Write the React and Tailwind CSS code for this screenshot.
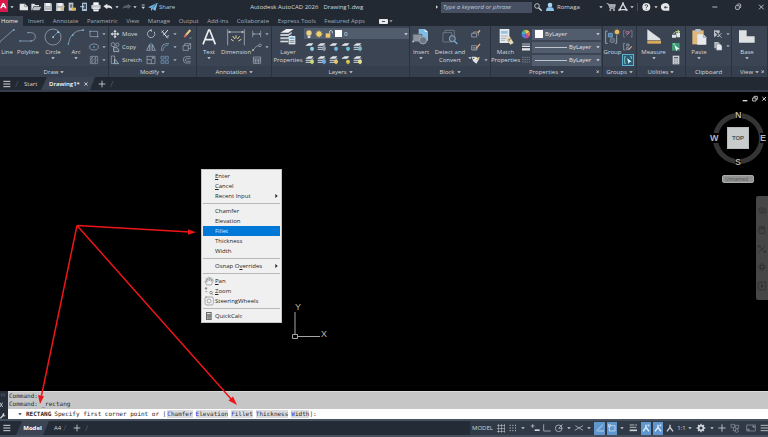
import React from "react";

/* Icons use a grid of three units to the pixel. */
function Icon({ w = 12, h = 12, sw = 2.5, children, className = "" }) {
  return (
    <svg
      aria-hidden="true"
      width={w}
      height={h}
      viewBox={`0 0 ${w * 3} ${h * 3}`}
      fill="none"
      stroke="currentColor"
      strokeWidth={sw}
      className={`shrink-0 ${className}`}
    >
      {children}
    </svg>
  );
}

const Caret = ({ className = "" }) => (
  <Icon w={4} h={4} className={className}>
    <path d="M1 4h10l-5 6z" fill="currentColor" stroke="none" />
  </Icon>
);

const fill = (c) => ({ fill: c, stroke: "none" });

/* ---------- title bar ---------- */
const NewFile = () => (
  <Icon><path d="M5 8h15l10 9v11H5z" {...fill("#e4e6e8")} /><path d="M20 8v9h10" stroke="#8b929b" /></Icon>
);
const OpenFile = () => (
  <Icon><path d="M4 8h9l3 4h11v4H11L6 28H4z" {...fill("#d9dcdf")} /><path d="M12 17h22l-6 11H7z" {...fill("#b9bec4")} /></Icon>
);
const SaveFile = () => (
  <Icon><path d="M6 6h21l3 3v21H6z" {...fill("#aeb5bd")} /><path d="M11 6h14v9H11z" {...fill("#eef0f1")} /><path d="M10 20h16v10H10z" {...fill("#dfe2e5")} /><path d="M10 24h16" stroke="#717a86" /></Icon>
);
const SaveAs = () => (
  <Icon><path d="M6 6h21l3 3v21H6z" {...fill("#aeb5bd")} /><path d="M11 6h14v9H11z" {...fill("#eef0f1")} /><path d="M10 20h12v10H10z" {...fill("#dfe2e5")} /><path d="M31 15L20 28" stroke="#e8c46a" strokeWidth="4" /></Icon>
);
const Mobile = () => (
  <Icon><path d="M8 5h14v24H8z" {...fill("#c8ccd1")} /><path d="M12 10h7v10h-7z" {...fill("#697380")} /><path d="M18 20h12v9H18z" {...fill("#d7b35d")} /></Icon>
);
const Phone = () => (
  <Icon><path d="M12 5h15v25H12z" {...fill("#a8bccd")} /><path d="M15 9h9v15h-9z" {...fill("#3b5266")} /><path d="M6 17h11m-4-5l5 5-5 5" stroke="#b6d6ee" /></Icon>
);
const Printer = () => (
  <Icon><path d="M10 4h16v8H10z" {...fill("#fff")} /><rect x="4" y="11" width="28" height="13" rx="3" {...fill("#c4c9ce")} /><path d="M10 20h16v11H10z" {...fill("#f4f5f6")} /><path d="M12 25h12" stroke="#8b929b" /></Icon>
);
const Undo = () => (
  <Icon><path d="M4 16l12-8v5c10 0 15 4 15 12-4-5-8-5-15-5v5z" {...fill("#e4e6e8")} /></Icon>
);
const Redo = () => (
  <Icon><path d="M31 16L20 8v5C10 13 5 17 5 24c4-4 8-4 15-4v5z" {...fill("#59616c")} /></Icon>
);
const Plane = () => (
  <Icon><path d="M3 19L32 5l-7 25-8-6-5 6v-9z" {...fill("#79c0ee")} /><path d="M12 21L27 9 17 24" stroke="#28445c" strokeWidth="1.500" /></Icon>
);

function TitleBar() {
  const bar = [["New", NewFile], ["Open", OpenFile], ["Save", SaveFile], ["Save as", SaveAs], ["Open from web", Mobile], ["Save to mobile", Phone], ["Plot", Printer]];
  return (
    <header className="flex h-[14px] items-center text-[#d5d9dd]">
      <button aria-label="Application menu" className="flex h-3 w-2 items-center self-start bg-[#d81b4c]">
        <Icon w={8} h={12}><path d="M0 25L8 9h4l8 16h-5l-2-4H7l-2 4z" {...fill("#fff")} /><path d="M8.500 18L10 14l2 4z" {...fill("#d81b4c")} /></Icon>
      </button>
      <Caret className="mx-[2px]" />
      <div className="ml-[2px] flex">
        {bar.map(([n, C]) => <button key={n} aria-label={n}><C /></button>)}
      </div>
      <div className="flex items-center">
        <button aria-label="Undo"><Undo /></button>
        <Caret className="mr-[2px] ml-[1px]" />
        <button aria-label="Redo"><Redo /></button>
        <Caret className="mr-[2px]" />
        <button aria-label="Customize toolbar">
          <Icon w={8} h={8}><path d="M8 6h9" /><path d="M7 11h11l-5 7z" {...fill("#d5d9dd")} /></Icon>
        </button>
      </div>
      <button className="flex items-center text-[#a9cde8]"><Plane />Share</button>
      <div className="flex flex-1 gap-[5px] pl-[75px] whitespace-nowrap">
        <span>Autodesk AutoCAD 2026</span><span>Drawing1.dwg</span>
      </div>
      <Icon w={4} h={6}><path d="M3 4l6 5-6 5z" {...fill("#d5d9dd")} /></Icon>
      <input aria-label="Search" placeholder="Type a keyword or phrase" className="ml-[2px] h-[11px] w-[91px] bg-[#465062] px-[2px] italic outline-none placeholder:text-[#c3c8cf]" />
      <Icon><circle cx="15" cy="15" r="7" /><path d="M20 20l9 9" strokeWidth="4" /></Icon>
      <button className="flex items-center">
        <Icon><circle cx="18" cy="12" r="7" {...fill("#a9d5f2")} /><path d="M6 30q0-10 8-11h8q8 1 8 11z" {...fill("#8ec4e8")} /></Icon>
        <span className="w-[43px] pl-[1px] text-left">Romaga</span>
        <Caret />
      </button>
      <button aria-label="Store" className="ml-[2px]">
        <Icon><path d="M5 8h5l5 14h13l3-11H12" /><path d="M12 12h18l-2 8H15z" {...fill("#a5abb3")} /><circle cx="16" cy="27" r="2" /><circle cx="27" cy="27" r="2" /></Icon>
      </button>
      <button aria-label="Autodesk apps">
        <Icon sw={4}><path d="M18 8L8 26h20z" /><path d="M18 4v6M4 27h7m14 0h7" /></Icon>
      </button>
      <Caret className="mx-[1px]" />
      <span className="mx-[2px] h-2 w-px bg-[#46505c]" />
      <button aria-label="Help">
        <Icon w={13}><circle cx="19" cy="18" r="12" {...fill("#e4e6e8")} /><path d="M15 15q0-4 4-4t4 4q0 2-4 4v2m0 2v3" stroke="#2b333e" /></Icon>
      </button>
      <Caret className="mx-[1px]" />
      <button aria-label="Feedback">
        <Icon w={13}><path d="M6 20a12 11 0 0 1 25-4v13H16Q8 29 6 20z" {...fill("#e4e6e8")} /><path d="M15 19h11m-7-4v8" stroke="#2b333e" /></Icon>
      </button>
      <div className="flex w-[96px] items-center justify-end gap-[11px] pr-[1px]">
        <button aria-label="Minimize"><Icon><path d="M10 18h15" /></Icon></button>
        <button aria-label="Restore"><Icon><rect x="11" y="14" width="11" height="11" rx="2" /><path d="M15 11q1-2 4-2h4q3 0 3 3v5q0 3-2 4" /></Icon></button>
        <button aria-label="Close"><Icon><path d="M12 11l14 14m0-14L12 25" /></Icon></button>
      </div>
    </header>
  );
}

/* ---------- ribbon tabs ---------- */
function RibbonTabs() {
  const tabs = ["Insert", "Annotate", "Parametric", "View", "Manage", "Output", "Add-ins", "Collaborate", "Express Tools", "Featured Apps"];
  return (
    <nav className="flex h-3 items-center text-[#a4abb4]">
      <button className="mt-[2px] flex h-[10px] w-[23px] items-center bg-[#3b4453] pl-[1px] text-[#e8eaec]">Home</button>
      <div className="mt-[2px] flex w-[342px] items-center justify-between pl-[5px] whitespace-nowrap">
        {tabs.map((t) => <button key={t}>{t}</button>)}
      </div>
      <span className="mt-[2px] ml-[14px] h-[5px] w-[9px] rounded-[1px] bg-[#e6e8ea] px-[3px] py-[2px]"><i className="block h-px bg-[#4a535f]" /></span>
      <Caret className="mt-[2px] ml-[1px]" />
    </nav>
  );
}

/* ---------- ribbon ---------- */
function Panel({ title, caret = true, corner = false, children }) {
  return (
    <section className="flex min-w-0 flex-col border-r border-[#2a323e] bg-[#3b4453] text-[#d6dade]">
      <div className="flex h-10 pt-[2px]">{children}</div>
      <h2 className="relative flex h-[11px] items-center justify-center gap-[2px] bg-[#363f4d]">
        {title}
        {caret && <Caret />}
        {corner && <Icon w={5} h={5} className="absolute right-[2px]"><path d="M4 4l6 6m0-6v6H4" strokeWidth="2" /></Icon>}
      </h2>
    </section>
  );
}

function Big({ label, caret, className, children, lines = 1 }) {
  return (
    <button className={`flex shrink-0 flex-col items-center leading-[8px] ${className}`}>
      {children}
      <span className={lines === 2 ? "mt-[2px] text-center whitespace-pre" : "mt-[2px] whitespace-nowrap"}>{label}</span>
      {caret && <Caret />}
    </button>
  );
}

const Col = ({ className = "", children }) => (
  <div className={`flex flex-col justify-between ${className}`}>{children}</div>
);

function Tool({ name, label, caret, children }) {
  return (
    <button aria-label={name} className="flex h-3 items-center text-[#a8b1bc]">
      <Icon sw={2}>{children}</Icon>
      {label && <span className="pl-[1px] text-[#d6dade]">{label}</span>}
      {caret && <Caret className="ml-[2px]" />}
    </button>
  );
}

function DrawPanel() {
  return (
    <Panel title="Draw">
      <Big label="Line" className="w-[14px]">
        <Icon w={16} h={18} sw={2}><path d="M2 42L44 5" stroke="#a8b1bc" /><path d="M42 3h5v5h-5zM0 41h4v4H0z" {...fill("#6ea9d8")} /></Icon>
      </Big>
      <Big label="Polyline" className="w-7">
        <Icon w={18} h={18} sw={2}><path d="M3 39h32q14-1 14-13T35 14H27" stroke="#a8b1bc" /><path d="M1 37h4v4H1zM25 12h4v4h-4zM34 37h4v4h-4z" {...fill("#6ea9d8")} /></Icon>
      </Big>
      <Big label="Circle" caret className="w-[22px]">
        <Icon w={18} h={18} sw={2}><circle cx="27" cy="27" r="24" stroke="#a8b1bc" /><path d="M27 27L42 12" stroke="#6ea9d8" /><path d="M25 25h5v5h-5zM40 10h5v5h-5z" {...fill("#9ccdf0")} /></Icon>
      </Big>
      <Big label="Arc" caret className="w-6">
        <Icon w={18} h={18} sw={2}><path d="M4 48Q10 8 48 6" stroke="#a8b1bc" /><path d="M2 46h4v4H2zM46 4h5v5h-5zM15 19h5v5h-5z" {...fill("#6ea9d8")} /></Icon>
      </Big>
      <Col>
        <Tool name="Rectangle" caret><path d="M6 10h23v16H6z" /><path d="M4 8h4v4H4zM27 24h4v4h-4z" {...fill("#6ea9d8")} /></Tool>
        <Tool name="Ellipse" caret><ellipse cx="18" cy="18" rx="13" ry="9" /><path d="M16 16h4v4h-4z" {...fill("#6ea9d8")} /></Tool>
        <Tool name="Hatch" caret><path d="M7 7h22v22H7zM7 17L17 7M7 27L27 7M15 29L29 15M12 7v22M22 7v22" strokeWidth="1.500" /></Tool>
      </Col>
    </Panel>
  );
}

function ModifyPanel() {
  return (
    <Panel title="Modify">
      <Col className="w-9">
        <Tool name="Move" label="Move"><path d="M18 9v18M9 18h18" stroke="#e6e9ec" strokeWidth="3" /><path d="M18 5l5 6H13zM18 31l5-6H13zM5 18l6-5v10zM31 18l-6-5v10z" {...fill("#e6e9ec")} /></Tool>
        <Tool name="Copy" label="Copy"><circle cx="12" cy="11" r="6" /><circle cx="25" cy="11" r="5" /><path d="M14 19h9l6 6v7H14z" fill="#4c5868" stroke="#c8ced5" /></Tool>
        <Tool name="Stretch" label="Stretch"><path d="M7 6h10v23H7z" /><path d="M17 15l12 14H17z" stroke="#c8ced5" /><path d="M12 28h12" stroke="#6ea9d8" /></Tool>
      </Col>
      <Col className="w-[14px]">
        <Tool name="Rotate"><path d="M27 11A11 11 0 1 1 16 7" strokeWidth="3" /><path d="M20 3v9l-6-5z" {...fill("#c8ced5")} /></Tool>
        <Tool name="Mirror"><path d="M14 10v18H5zM22 10v18h9z" stroke="#b6bfc9" /><path d="M18 5v26" stroke="#6ea9d8" /></Tool>
        <Tool name="Scale"><path d="M6 7h24v22H6zM6 17h13v12M20 15l6-5m-6 0h6v5" /></Tool>
      </Col>
      <Col className="w-[22px]">
        <Tool name="Trim" caret><path d="M8 8l16 20M27 6L13 22" stroke="#e6e9ec" strokeWidth="3" /><path d="M7 14l8-8M22 29l8-8" stroke="#c8ced5" /><circle cx="25" cy="27" r="3" /></Tool>
        <Tool name="Fillet" caret><path d="M8 30V20Q9 9 21 8h9" /><path d="M12 30q0-16 16-18" stroke="#6ea9d8" /></Tool>
        <Tool name="Array" caret><path d="M6 7h9v8H6zM19 7h9v8h-9zM6 20h9v8H6zM19 20h9v8h-9z" stroke="#76a4c9" /></Tool>
      </Col>
      <Col>
        <Tool name="Erase"><path d="M28 6L14 22" stroke="#e9cf8c" strokeWidth="6" /><path d="M16 20l-6 7" stroke="#e36a61" strokeWidth="6" /><path d="M25 30h7" /></Tool>
        <Tool name="Explode"><path d="M6 14h16v14H6zM11 14V8h18v15h-7M22 14l7-6" /></Tool>
        <Tool name="Offset"><path d="M29 8H14q-7 1-7 9t7 10h15M29 14H17q-4 1-4 4t4 4h12" /></Tool>
      </Col>
    </Panel>
  );
}

function AnnotationPanel() {
  return (
    <Panel title="Annotation">
      <Big label="Text" caret className="w-6">
        <Icon w={16} h={18} sw={5}><path d="M6 49L23 6h3l17 43M12 35h25" stroke="#eceef0" /></Icon>
      </Big>
      <Big label="Dimension" className="w-[30px]">
        <Icon w={18} h={18} sw={2}><path d="M2 4v48M52 4v48M4 12h46" stroke="#c4cad1" /><path d="M3 12l7-4v8zM51 12l-7-4v8z" {...fill("#c4cad1")} /><path d="M12 34l8 5M17 24l7 9M27 22v9M38 25l-7 8M43 34l-9 5" stroke="#e8d69b" strokeWidth="3" /></Icon>
      </Big>
      <Col>
        <Tool name="Linear" caret><path d="M5 8v20M29 8v20M6 18h22" /><path d="M5 18l5-3v6zM29 18l-5-3v6z" {...fill("#a8b1bc")} /></Tool>
        <Tool name="Leader" caret><path d="M5 29l12-14h7" /><path d="M3 31l2-8 5 5z" {...fill("#c8ced5")} /><circle cx="27" cy="13" r="4" /></Tool>
        <Tool name="Table"><path d="M7 9h22v19H7zM7 15h22M7 21h22M14 15v13M22 15v13" /></Tool>
      </Col>
    </Panel>
  );
}

const layerMarks = ["#8fd3e8", "#8f9bab", "#6fb6e3", "#64c7d3", "#7fb7c3", "#c9df76", "#6fa8e0", "#e6c963", "#d8c84e", "#efe28b"];
const Layers = ({ mark, lower }) => (
  <>
    <path d="M5 13l9-6h14l-6 7H5z" {...fill("#e1e5e8")} />
    {lower && <path d="M5 17h16l7-6v4l-7 6H5zM5 23h16l7-6v4l-7 6H5z" {...fill("#b4bdc5")} />}
    <circle cx="24" cy="23" r="6" {...fill(mark)} />
    <path d="M22 29h5" stroke={mark} />
  </>
);

function Combo({ name, value, children, className = "" }) {
  return (
    <div className={`relative flex h-[11px] items-center bg-[#515c6d] ${className}`}>
      {children}
      <select aria-label={name} className="h-[11px] min-w-0 flex-1 appearance-none bg-transparent pl-[2px] text-[#e0e3e6] outline-none">
        <option>{value}</option>
      </select>
      <Caret className="mr-[1px] text-[#e0e3e6]" />
    </div>
  );
}

function LayersPanel() {
  return (
    <Panel title="Layers">
      <Big lines={2} label={"Layer\nProperties"} className="w-[32px]">
        <Icon w={18} h={18}><path d="M4 14L22 3h22L28 14z" {...fill("#eef0f1")} /><path d="M4 18h24l10-7v6L28 24H4zM4 28h24l10-7v6L28 34H4z" {...fill("#c3c9ce")} /><path d="M4 38h24v5H4z" {...fill("#d8dcdf")} /><path d="M29 24h20v25H29z" {...fill("#dfe5e9")} /><path d="M32 28h14v5H32z" {...fill("#67b4e6")} /><path d="M32 38h14M32 43h14" stroke="#6b7785" /></Icon>
      </Big>
      <div className="flex min-w-0 flex-1 flex-col justify-between">
        <Combo name="Layer" value="0">
          <Icon w={10} h={10}><circle cx="15" cy="12" r="8" {...fill("#f0cf83")} /><path d="M11 20h8v7h-8z" {...fill("#d8dcdf")} /></Icon>
          <Icon w={10} h={10}><circle cx="15" cy="15" r="8" {...fill("#f0cf6b")} /><path d="M15 3v24M3 15h24M7 7l16 16M23 7L7 23" stroke="#f0cf6b" strokeWidth="1.500" /></Icon>
          <Icon w={10} h={10}><path d="M5 13h14v13H5z" {...fill("#edc56f")} /><path d="M17 13V6q5-4 8 1v6" stroke="#d8dcdf" /></Icon>
          <span className="ml-[1px] h-[7px] w-[7px] bg-white" />
        </Combo>
        {[0, 5].map((r) => (
          <div key={r} className="flex">
            {layerMarks.slice(r, r + 5).map((m, i) => (
              <Tool key={m} name={`Layer tool ${r + i + 1}`}><Layers mark={m} lower={(r === 5 && i !== 3) || i === 1 || i === 4} /></Tool>
            ))}
          </div>
        ))}
      </div>
    </Panel>
  );
}

function BlockPanel() {
  return (
    <Panel title="Block">
      <Big label="Insert" caret className="w-[22px]">
        <Icon w={18} h={18}><path d="M20 3h18l10 9v26H20z" {...fill("#80bde5")} /><path d="M38 3l10 9H38z" {...fill("#d3eafa")} /><path d="M3 19h27v22H3z" fill="#8a939e" stroke="#5d6774" /><circle cx="33" cy="37" r="11" fill="#6d7783" stroke="#a8b1bc" /><path d="M1 38h5v5H1z" {...fill("#c4cad1")} /></Icon>
      </Big>
      <Big lines={2} label={"Detect and\nConvert"} className="w-[36px]">
        <Icon w={18} h={18}><path d="M6 14h26v28H6zM12 14V7h28v26H32" stroke="#727e8d" /><circle cx="34" cy="32" r="9" fill="#48586b" stroke="#a2bcd2" /><path d="M40 39l9 9" stroke="#6ea9d8" strokeWidth="4" /></Icon>
      </Big>
      <Caret className="mt-[28px] -mr-[2px]" />
      <Col>
        <Tool name="Create block"><path d="M5 16h15v11H5zM10 16v-4h15v11" stroke="#aeb5bd" /><path d="M24 14l6-7" stroke="#e6c479" strokeWidth="4" /></Tool>
        <Tool name="Edit block"><path d="M5 14h15v13H5z" stroke="#aeb5bd" /><path d="M8 20h9m-9 4h15" /><path d="M19 22L30 9" stroke="#e6a97a" strokeWidth="4" /></Tool>
        <Tool name="Edit attributes" caret><path d="M5 8h12l11 6-9 15-10-8z" {...fill("#dfe2e5")} /><path d="M20 18l8-8" stroke="#dfbf72" strokeWidth="4" /><circle cx="11" cy="13" r="2" {...fill("#38404e")} /></Tool>
      </Col>
    </Panel>
  );
}

function PropertiesPanel() {
  return (
    <Panel title="Properties" corner>
      <Big lines={2} label={"Match\nProperties"} className="w-[29px]">
        <Icon w={18} h={18}><path d="M8 3h29v42H8z" {...fill("#e5e8ea")} /><path d="M12 9h20v8H12z" {...fill("#92c3e4")} /><path d="M12 24h20M12 31h15M12 37h12" stroke="#9ca5af" /><path d="M26 30l12-5 12 20-10 5z" {...fill("#ead9b5")} /><path d="M31 37l12-6M34 43l6-12" stroke="#87765b" /></Icon>
      </Big>
      <div className="flex min-w-0 flex-1 flex-col justify-between">
        <div className="flex items-center">
          <Icon><g stroke="none"><path d="M18 18V5a13 13 0 0 1 11 7z" fill="#f0c954" /><path d="M18 18l11-6a13 13 0 0 1-1 14z" fill="#ed7445" /><path d="M18 18l10 8a13 13 0 0 1-13 5z" fill="#c250a4" /><path d="M18 18l-3 13A13 13 0 0 1 5 19z" fill="#547de0" /><path d="M18 18L5 19a13 13 0 0 1 4-11z" fill="#44b5cf" /><path d="M18 18L9 8a13 13 0 0 1 9-3z" fill="#70bf6a" /></g></Icon>
          <Combo name="Color" value="ByLayer" className="mr-[1px] min-w-0 flex-1"><span className="ml-[3px] h-2 w-2 bg-white" /></Combo>
        </div>
        {["Lineweight", "Linetype"].map((n, i) => (
          <div key={n} className="flex items-center">
            {i === 0
              ? <Icon><path d="M6 9h24" /><path d="M6 16h24" stroke="#e3e6e8" strokeWidth="4" /><path d="M6 25h24" stroke="#e3e6e8" strokeWidth="7" /></Icon>
              : <Icon sw={1.5}><path d="M6 10h24M6 17h24M6 24h24" stroke="#aab1ba" strokeDasharray="5 2" /></Icon>}
            <Combo name={n} value="ByLayer" className="mr-[1px] min-w-0 flex-1"><span className="ml-[3px] h-px w-8 bg-[#bfc5cc]" /></Combo>
          </div>
        ))}
      </div>
    </Panel>
  );
}

function SmallPanels() {
  return (
    <>
      <Panel title="Groups">
        <Big label="Group" className="w-[19px]">
          <Icon w={18} h={18}><path d="M11 9H5v37h6M38 22v24h-5" stroke="#aab3bd" /><path d="M13 16h12v11H13z" fill="#4d7fa7" stroke="#74aad3" /><circle cx="25" cy="37" r="7" fill="#56606e" stroke="#818c99" /><circle cx="39" cy="12" r="6" {...fill("#ffdc83")} /><path d="M39 2v20M29 12h20M32 5l14 14M46 5L32 19" stroke="#e6b54b" strokeWidth="2" /></Icon>
        </Big>
        <Col>
          <Tool name="Ungroup"><path d="M9 7H5v20h4M26 7h4v20h-4" stroke="#8392a4" /><path d="M12 10h8v6h-8z" stroke="#d67f9d" /><path d="M13 23L26 9" stroke="#d67f9d" /></Tool>
          <Tool name="Edit group"><path d="M9 7H5v20h4M14 9h7v6h-7zM13 20h6v6h-6z" /><path d="M20 26l9-10" stroke="#dca282" strokeWidth="4" /></Tool>
          <button aria-label="Group selection" className="border border-[#5bb1cf] bg-[#285c74]">
            <Icon w={10} h={10}><path d="M9 5H5v20h4M21 5h4v7" stroke="#8ed2cc" /><path d="M12 9l14 11-6 1-3 6z" {...fill("#d5f1ef")} /></Icon>
          </button>
        </Col>
      </Panel>
      <Panel title="Utilities">
        <Big label="Measure" caret className="w-[33px]">
          <Icon w={18} h={18}><path d="M7 4l39 28v5H7z" {...fill("#dfe2e4")} /><path d="M7 38h41v9H7z" {...fill("#dcae5e")} /><path d="M12 39v4M21 39v4M30 39v4M39 39v4" stroke="#b18a48" strokeWidth="1.500" /></Icon>
        </Big>
        <Col>
          <Tool name="Quick select"><path d="M6 20h12v9H6zM18 14h12v14H20" {...fill("#e1e5e7")} /><path d="M10 18l7-7h11m-5-5l6 5-6 5" stroke="#c6df8b" strokeWidth="3" /></Tool>
          <Tool name="Select all"><path d="M6 6h23v23H6z" {...fill("#3d9b78")} /><path d="M9 9h7m-4-3v7" stroke="#9de0c4" /><path d="M13 12l16 12-7 1-3 6z" {...fill("#f1f4f4")} /></Tool>
          <Tool name="Calculator"><path d="M8 5h20v26H8z" {...fill("#cdd1d5")} /><path d="M12 9h12v4H12z" {...fill("#586370")} /><path d="M12 18h12M12 23h12M12 28h12" stroke="#66717d" strokeDasharray="3 1.500" /></Tool>
        </Col>
      </Panel>
      <Panel title="Clipboard" caret={false}>
        <Big label="Paste" caret className="w-[26px]">
          <Icon w={18} h={18}><path d="M7 7h34v42H7z" {...fill("#deb77d")} /><path d="M16 3h16v9H16z" {...fill("#b8bec4")} /><path d="M22 19h18l9 9v22H22z" {...fill("#e7eaec")} /><path d="M40 19v9h9" stroke="#929da8" /></Icon>
        </Big>
        <div>
          <Tool name="Cut" caret><path d="M6 7h17v19H6z" {...fill("#bcc3ca")} /><path d="M10 12l17 16M27 13L11 27" stroke="#3b4453" strokeWidth="4" /><path d="M17 18l12 11M29 15L17 27" stroke="#dfe3e6" /></Tool>
          <Tool name="Copy clip" caret><path d="M7 6h12l5 6v13H7z" {...fill("#b8bfc6")} /><path d="M13 12h12l5 6v13H13z" fill="#e7eaec" stroke="#5c6673" strokeWidth="1.500" /></Tool>
        </div>
      </Panel>
      <Panel title="View" corner>
        <Big label="Base" caret className="w-[30px]">
          <Icon w={18} h={18}><path d="M3 7h23v18h24v19H3z" {...fill("#dee1e4")} /></Icon>
        </Big>
      </Panel>
    </>
  );
}

/* ---------- file tabs ---------- */
const Menu3 = () => <Icon><path d="M7 10h21M7 18h21M7 26h21" strokeWidth="3" /></Icon>;

function FileTabs() {
  return (
    <nav className="flex h-[15px] items-center border-b-2 border-[#353e4b] text-[#cfd3d8]">
      <button aria-label="Drawing menu" className="ml-[1px]"><Menu3 /></button>
      <Icon w={8}><path d="M8 27l7-18" stroke="#465160" /></Icon>
      <button className="ml-[3px] w-[17px] text-left">Start</button>
      <div className="flex h-[13px] w-[54px] items-center bg-[#3b4453] pl-[8px] font-semibold text-white [clip-path:polygon(6px_0,100%_0,calc(100%-5px)_100%,0_100%)]">
        <button className="whitespace-nowrap">Drawing1*</button>
        <button aria-label="Close drawing" className="ml-[2px]"><Icon w={8} h={8}><path d="M7 7l10 10M17 7L7 17" strokeWidth="2" /></Icon></button>
      </div>
      <button aria-label="New drawing" className="ml-[1px]"><Icon><path d="M18 8v20M8 18h20" /></Icon></button>
      <Icon w={8}><path d="M8 27l7-18" stroke="#465160" /></Icon>
    </nav>
  );
}

/* ---------- context menu ---------- */
function Item({ pre = "", u, post, sub, active, icon }) {
  return (
    <button role="menuitem" className={`flex h-[10px] w-full items-center ${active ? "bg-[#0078d7] text-[#d5ebff]" : ""}`}>
      <span className="flex w-3 justify-center text-[#666]">{icon}</span>
      <span className="flex-1 text-left">{pre}<u className="decoration-1">{u}</u>{post}</span>
      {sub && <Icon w={6} h={6}><path d="M4 3l7 6-7 6z" fill="currentColor" stroke="none" /></Icon>}
    </button>
  );
}
const Rule = () => <hr className="my-[2px] h-px border-0 bg-[#b8b8b8]" />;

function ContextMenu() {
  return (
    <div role="menu" className="absolute top-[77px] left-[201px] w-[81px] border border-[#c5c5c5] bg-[#f0f0f0] p-px text-[#242424]">
      <Item u="E" post="nter" />
      <Item u="C" post="ancel" />
      <Item post="Recent Input" sub />
      <Rule />
      <Item post="Chamfer" />
      <Item post="Elevation" />
      <Item post="Fillet" active />
      <Item post="Thickness" />
      <Item post="Width" />
      <Rule />
      <Item pre="Osnap O" u="v" post="errides" sub />
      <Rule />
      <Item u="P" post="an" icon={<Icon w={10} h={10} sw={1.5}><path d="M8 27l-5-9q-1-4 3-3l3 4-3-11q2-4 4 0l2 6V5q3-4 5 0v9l2-8q3-2 4 1l-1 9 3-5q4-1 2 4l-5 12z" /></Icon>} />
      <Item u="Z" post="oom" icon={<Icon w={10} h={10} sw={2}><path d="M6 3v9M2 7h8M4 17h6" /><circle cx="21" cy="20" r="4" /><path d="M24 23l4 4" /></Icon>} />
      <Item post="SteeringWheels" icon={<Icon w={10} h={10} sw={1.5}><path d="M5 3h19q4 0 4 5v13q0 6-6 6H9q-6 0-6-6V8q0-5 5-5z" /><circle cx="15" cy="15" r="6" /></Icon>} />
      <Rule />
      <Item post="QuickCalc" icon={<Icon w={10} h={10}><path d="M6 3h17v24H6z" {...fill("#686868")} /><path d="M9 6h11v4H9z" {...fill("#ddd")} /><path d="M9 15h11M9 19h11M9 23h11" stroke="#ddd" strokeWidth="2" strokeDasharray="3 1" /></Icon>} />
    </div>
  );
}

/* ---------- drawing area ---------- */
function Canvas() {
  return (
    <main className="relative flex-1 bg-black">
      <ContextMenu />
      <svg aria-hidden="true" className="absolute top-[219px] left-[290px]" width="32" height="30" fill="none" stroke="#a6a6a6">
        <path d="M2.500 23.500h5v4h-5zM5 23V1M8 25.500h22" />
      </svg>
      <span className="absolute top-[210px] left-[295px] font-['Liberation_Sans',sans-serif] text-[9px] leading-[10px] text-[#b5b5b5]">Y</span>
      <span className="absolute top-[237px] left-[321px] font-['Liberation_Sans',sans-serif] text-[9px] leading-[10px] text-[#b5b5b5]">X</span>

      <div className="absolute top-[1px] right-0 flex text-[#dcdcdc]">
        <button aria-label="Minimize drawing"><Icon w={9}><path d="M5 23h14" strokeWidth="4" /></Icon></button>
        <button aria-label="Restore drawing"><Icon w={10}><path d="M8 15h10v9H8zM12 15v-5h10v9h-4" /></Icon></button>
        <button aria-label="Close drawing window"><Icon w={8}><path d="M7 12l11 11M18 12L7 23" strokeWidth="3" /></Icon></button>
      </div>

      <div className="absolute top-[17px] right-[2px] h-[58px] w-14 font-['Liberation_Sans',sans-serif] text-[9px] leading-[10px] font-bold text-[#b4b4b4]">
        <div className="absolute top-[4px] left-[3px] h-[51px] w-[51px] rounded-full border-[5px] border-[#353535]" />
        <span className="absolute top-[1px] left-[25px] bg-black">N</span>
        <span className="absolute top-[24px] left-0 bg-black">W</span>
        <span className="absolute top-[24px] right-0 bg-black">E</span>
        <span className="absolute top-[48px] left-[25px] bg-black">S</span>
        <button className="absolute top-[18px] left-[17px] h-[22px] w-[22px] border border-[#b7bbbb] bg-[#c8cccc] text-[6px] text-[#4e5558]">TOP</button>
      </div>
      <button className="absolute top-[83px] right-[14px] flex h-2 w-8 items-center rounded-[2px] border border-[#aaa] bg-[#929292] pl-[2px] text-[5px] text-[#555]">Unnamed</button>

      <div className="absolute top-[104px] right-0 flex h-[104px] w-3 flex-col items-center justify-between rounded-l-[2px] bg-[#464646] pt-[9px] pb-2 text-[#2c2c2c]">
        <button aria-label="Navigation wheel"><Icon sw={2}><path d="M11 9h14q5 3 4 15H13Q8 20 9 12z" /><circle cx="19" cy="17" r="4" /></Icon></button>
        <button aria-label="Pan view"><Icon sw={2}><path d="M11 28l-5-9q2-3 5 1l-1-11q3-3 4 1l2 6V7q3-3 5 1v8l2-7q4 0 3 5v14z" /></Icon></button>
        <button aria-label="Zoom extents"><Icon sw={2}><path d="M7 8l22 20M29 8L7 28M7 14V8h7M29 22v6h-7" /></Icon></button>
        <button aria-label="Orbit"><Icon sw={2}><ellipse cx="18" cy="18" rx="11" ry="5" /><ellipse cx="18" cy="18" rx="5" ry="11" /></Icon></button>
        <button aria-label="Show motion"><Icon sw={2}><path d="M7 7h22v22H7z" /><path d="M15 12l8 6-8 6z" {...fill("#2c2c2c")} /></Icon></button>
      </div>
    </main>
  );
}

/* ---------- command line ---------- */
function CommandLine() {
  const options = ["Chamfer", "Elevation", "Fillet", "Thickness", "Width"];
  return (
    <section className="flex h-7 bg-[#252e3a] font-['DejaVu_Sans_Mono',monospace] text-[6px] leading-[8px] text-[#282828]">
      <div className="flex w-2 flex-col items-center justify-between text-[#d6dade]">
        <Icon w={8} h={8}><path d="M4 9h12M4 14h12" stroke="#76808c" strokeDasharray="2 2" /></Icon>
        <button aria-label="Close command line"><Icon w={8} h={8}><path d="M0 5l8 13M8 5L0 18" /></Icon></button>
        <button aria-label="Customize command line"><Icon w={8} h={8}><path d="M1 22l9-9" strokeWidth="4" /><path d="M9 7q-4 5 0 8t8-1l-5-1 1-6z" {...fill("#d6dade")} /></Icon></button>
      </div>
      <div className="flex min-w-0 flex-1 flex-col">
        <div className="h-[18px] border-t border-[#dadada] bg-[#c6c6c6] pl-[1px] whitespace-pre">
          <p>Command:</p>
          <p>Command: _rectang</p>
        </div>
        <label className="flex h-[10px] items-center bg-white whitespace-pre">
          <Caret className="mr-1 ml-[10px]" />
          <b>RECTANG</b>
          <span className="pr-[1px] pl-[3px]">Specify first corner point or [</span>
          <span className="flex gap-[3px]">
            {options.map((o) => (
              <button key={o} className="bg-[#dcdce0]"><span className="text-[#2b35d4]">{o[0]}</span>{o.slice(1)}</button>
            ))}
          </span>
          <span>]:</span>
          <input aria-label="Command input" className="h-2 min-w-0 flex-1 bg-transparent outline-none" />
        </label>
      </div>
    </section>
  );
}

/* ---------- status bar ---------- */
function S({ n, w, on, children }) {
  return (
    <button aria-label={n} className={`flex h-[13px] items-center justify-center ${w} ${on ? "border-x border-[#303946] bg-[#5f96cd] text-[#e5f2ff]" : ""}`}>
      {children}
    </button>
  );
}
const Person = ({ extra }) => (
  <Icon w={10} h={12} sw={4}><path d="M15 8v10M15 16L6 28M15 16l9 12" />{extra && <path d="M22 7v7m-3-4h7" strokeWidth="2" />}</Icon>
);

function StatusBar() {
  return (
    <footer className="flex h-[18px] items-center border-t-2 border-b-2 border-[#46505e] bg-[#222b36] text-[#cfd4d9]">
      <button aria-label="Layout menu" className="ml-[1px]"><Menu3 /></button>
      <button className="ml-[3px] flex h-full w-[33px] items-center justify-center bg-[#3b4453] font-bold text-white [clip-path:polygon(6px_0,100%_0,calc(100%-6px)_100%,0_100%)]">Model</button>
      <button className="ml-[5px]">A4</button>
      <Icon w={8}><path d="M8 27l7-18" stroke="#465160" /></Icon>
      <button aria-label="New layout" className="ml-[2px]"><Icon><path d="M18 8v20M8 18h20" /></Icon></button>
      <Icon w={8}><path d="M8 27l7-18" stroke="#465160" /></Icon>
      <div className="flex-1" />
      <div className="flex h-full items-center bg-[#303946]">
        <S w="w-[25px]"><span>MODEL</span></S>
        <S n="Grid" w="w-3"><Icon sw={1.5}><path d="M6 10.500h24M6 19.500h24M6 28.500h24M10.500 6v26M19.500 6v26M28.500 6v26" /></Icon></S>
        <S n="Snap" w="w-3"><Icon><path d="M8 10h22M8 18h22M8 26h22" strokeDasharray="3 5" strokeWidth="3" /></Icon></S>
        <S n="Snap options" w="w-2"><Caret /></S>
        <S n="Dynamic input" w="w-[15px]"><Icon><path d="M11 6v12M5 12h12" strokeWidth="2" /><path d="M17 22h15v5H17z" {...fill("#cfd4d9")} /></Icon></S>
        <S n="Ortho" w="w-[10px]"><Icon w={10}><path d="M5 7v20h21" strokeWidth="2" /></Icon></S>
        <S n="Polar tracking" w="w-[13px]"><Icon sw={2}><circle cx="17" cy="19" r="10" /><path d="M17 19L29 7M17 19h11" /></Icon></S>
        <S n="Polar options" w="w-[7px]"><Caret /></S>
        <S n="Isometric" w="w-[13px]"><Icon sw={2}><path d="M5 25L30 11M7 11l23 14" /></Icon></S>
        <S n="Isometric options" w="w-2"><Caret /></S>
        <S n="Object tracking" w="w-[13px]" on><Icon w={10} sw={2}><path d="M4 27L24 8M8 27h19" /></Icon></S>
        <S n="Object snap" w="w-3" on><Icon w={10} sw={2}><path d="M7 11h17v16H7z" /><path d="M4 8h6v6H4z" fill="#5f96cd" /></Icon></S>
        <S n="Snap settings" w="w-2"><Caret /></S>
        <S n="Lineweight display" w="w-[14px]"><Icon><path d="M8 9h14m3 0h5M8 16h20" /><path d="M8 25h22" strokeWidth="5" /></Icon></S>
        <S n="Annotation visibility" w="w-3" on><Person extra /></S>
        <S n="Automatic scale" w="w-3" on><Person extra /></S>
        <S n="Annotation scale" w="w-3"><Person /></S>
        <S w="w-[11px]"><span>1:1</span></S>
        <S n="Scale list" w="w-[6px]"><Caret /></S>
        <S n="Workspace" w="w-[15px]"><Icon><circle cx="18" cy="18" r="7" strokeWidth="5" /><path d="M18 5v5m0 16v5M5 18h5m16 0h5M9 9l4 4m10 10l4 4M27 9l-4 4M13 23l-4 4" strokeWidth="4" /></Icon></S>
        <S n="Workspace options" w="w-[7px]"><Caret /></S>
        <S n="Annotation monitor" w="w-[13px]"><Icon><path d="M18 7v22M7 18h22" /></Icon></S>
        <S n="Isolate objects" w="w-[14px]"><Icon sw={2} className="text-[#929ba6]"><path d="M6 7h11v9H6zM19 10h10v9H19zM13 17v9h8" /><circle cx="23" cy="26" r="5" /></Icon></S>
        <S n="Clean screen" w="w-[17px]"><Icon sw={2}><path d="M5 9h26v18H5z" stroke="#929ba6" /><path d="M9 20v4h5M22 13h5v5" /></Icon></S>
        <S n="Customization" w="w-[9px]"><Icon w={9}><path d="M5 10h22M5 18h22M5 26h22" /></Icon></S>
      </div>
    </footer>
  );
}

/* ---------- callout arrows over the drawing ---------- */
function Callouts() {
  return (
    <svg aria-hidden="true" className="pointer-events-none absolute top-[220px] left-[30px]" width="215" height="190" fill="none" stroke="#ee1519" strokeWidth="1.500">
      <path d="M47 5.500L160 12M47 5.500L11 178M47 5.500L202 180" />
      <g fill="#ee1519" stroke="none"><path d="M166 12.300l-8-3v5.500zM10 184l-2-9 6 1.200zM207 185l-8.500-4.500 4.500-4z" /></g>
    </svg>
  );
}

export default function App() {
  return (
    <div className="relative flex min-h-screen flex-col bg-[#222933] font-['Open_Sans','Noto_Sans',sans-serif] text-[6px] leading-[8px]">
      <TitleBar />
      <RibbonTabs />
      <div className="grid grid-cols-[109fr_88fr_75fr_138fr_81fr_112fr_34fr_49fr_46fr_36fr]">
        <DrawPanel />
        <ModifyPanel />
        <AnnotationPanel />
        <LayersPanel />
        <BlockPanel />
        <PropertiesPanel />
        <SmallPanels />
      </div>
      <FileTabs />
      <Canvas />
      <CommandLine />
      <StatusBar />
      <Callouts />
    </div>
  );
}
